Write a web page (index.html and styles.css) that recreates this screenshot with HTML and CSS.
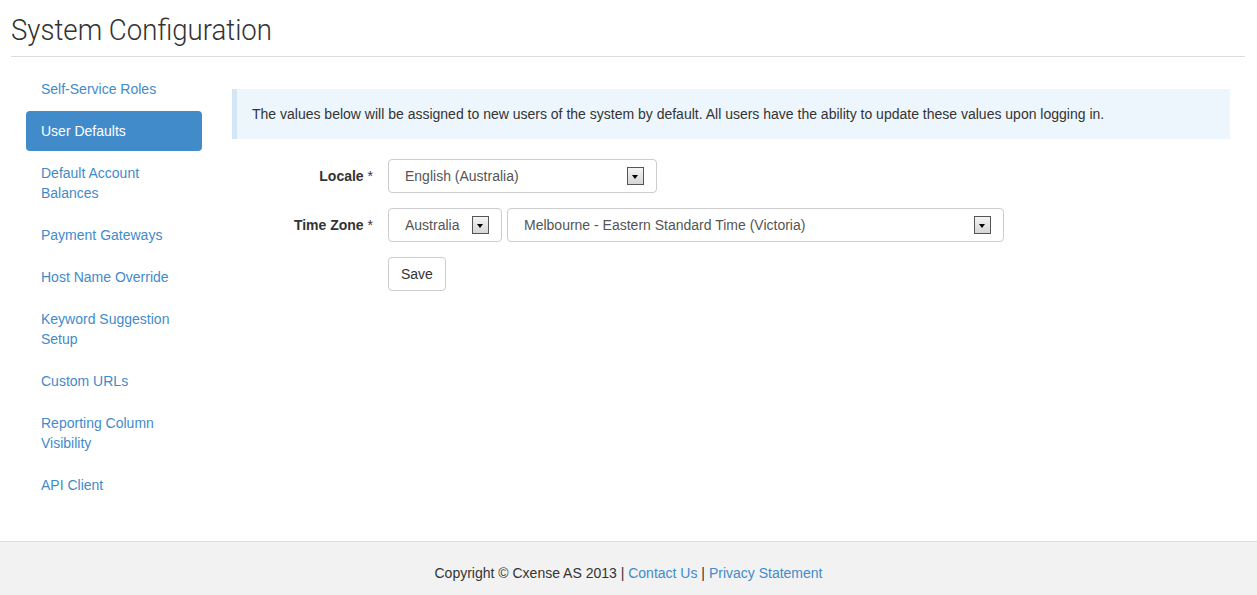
FILE: index.html
```html
<!DOCTYPE html>
<html lang="en">
<head>
    <meta charset="UTF-8">
    <title>System Configuration</title>
    <link rel="stylesheet" href="styles.css">
</head>
<body>

    <div class="page">
        <h1 class="page-title"><span>System Configuration</span></h1>

        <div class="layout">
            <ul class="side-nav">
                <li><a href="#">Self-Service Roles</a></li>
                <li class="active"><a href="#">User Defaults</a></li>
                <li><a href="#">Default Account<br>Balances</a></li>
                <li><a href="#">Payment Gateways</a></li>
                <li><a href="#">Host Name Override</a></li>
                <li><a href="#">Keyword Suggestion<br>Setup</a></li>
                <li><a href="#">Custom URLs</a></li>
                <li><a href="#">Reporting Column<br>Visibility</a></li>
                <li><a href="#">API Client</a></li>
            </ul>

            <div class="content">
                <div class="info-box">
                    The values below will be assigned to new users of the system by default. All users have the ability to update these values upon logging in.
                </div>

                <form class="defaults-form">
                    <div class="form-row">
                        <label class="form-label">Locale <span class="req">*</span></label>
                        <div class="fields">
                            <div class="select locale-select">
                                <span>English (Australia)</span>
                                <span class="arrow"></span>
                            </div>
                        </div>
                    </div>

                    <div class="form-row">
                        <label class="form-label">Time Zone <span class="req">*</span></label>
                        <div class="fields">
                            <div class="select region-select">
                                <span>Australia</span>
                                <span class="arrow"></span>
                            </div>
                            <div class="select zone-select">
                                <span>Melbourne - Eastern Standard Time (Victoria)</span>
                                <span class="arrow"></span>
                            </div>
                        </div>
                    </div>

                    <div class="form-row">
                        <span class="form-label"></span>
                        <div class="fields">
                            <button type="button" class="btn">Save</button>
                        </div>
                    </div>
                </form>
            </div>
        </div>
    </div>

    <div class="footer">
        Copyright © Cxense AS 2013 | <a href="#">Contact Us</a> | <a href="#">Privacy Statement</a>
    </div>

</body>
</html>
```

FILE: styles.css
```css
* {
    box-sizing: border-box;
}

body {
    margin: 0;
    font-family: 'Liberation Sans', Arial, sans-serif;
    font-size: 14px;
    line-height: 20px;
    color: #333;
    background: #fff;
}

a {
    color: #428bca;
    text-decoration: none;
}

.page {
    padding: 0 12px 0 11px;
}

.page-title {
    font-family: Roboto, sans-serif;
    font-weight: 300;
    font-size: 30px;
    line-height: 36px;
    color: #333;
    margin: 12px 0 0;
    padding-bottom: 8px;
    border-bottom: 1px solid #ddd;
}

.page-title span {
    display: inline-block;
    transform: scaleX(0.92);
    transform-origin: left center;
}

.layout {
    display: flex;
    padding: 12px 15px 0 15px;
}

/* Sidebar */
.side-nav {
    list-style: none;
    margin: 0 0 34px;
    padding: 0;
    width: 176px;
    flex-shrink: 0;
}

.side-nav li {
    margin-bottom: 2px;
}

.side-nav a {
    display: block;
    padding: 10px 15px;
    border-radius: 4px;
}

.side-nav li.active a {
    background: #428bca;
    color: #fff;
}

.content {
    flex: 1;
    margin-left: 30px;
    padding-top: 20px;
}

.info-box {
    background: #eef6fd;
    border-left: 5px solid #d3e6f5;
    padding: 15px 15px;
    margin-bottom: 20px;
}

/* Form */
.form-row {
    display: flex;
    align-items: center;
    margin-bottom: 15px;
}

.form-label {
    width: 141px;
    text-align: right;
    font-weight: bold;
    margin-right: 15px;
}

.form-label .req {
    font-weight: normal;
}

.fields {
    display: flex;
    gap: 5px;
}

.select {
    height: 34px;
    border: 1px solid #ccc;
    border-radius: 4px;
    display: flex;
    align-items: center;
    justify-content: space-between;
    padding: 0 12px 0 16px;
    color: #555;
}

.locale-select {
    width: 269px;
}

.region-select {
    width: 114px;
}

.zone-select {
    width: 497px;
}

.arrow {
    width: 17px;
    height: 18px;
    border: 1px solid #555;
    background: linear-gradient(#f4f4f4, #d6d6d6);
    position: relative;
}

.arrow::after {
    content: "";
    position: absolute;
    left: 4px;
    top: 7px;
    border-left: 3.5px solid transparent;
    border-right: 3.5px solid transparent;
    border-top: 4px solid #000;
}

.btn {
    font-family: 'Liberation Sans', Arial, sans-serif;
    font-size: 14px;
    color: #333;
    background: #fff;
    border: 1px solid #ccc;
    border-radius: 4px;
    height: 34px;
    padding: 0 12px;
    cursor: pointer;
}

.footer {
    background: #f2f2f2;
    border-top: 1px solid #ddd;
    text-align: center;
    padding: 21px 0 20px;
}
```
